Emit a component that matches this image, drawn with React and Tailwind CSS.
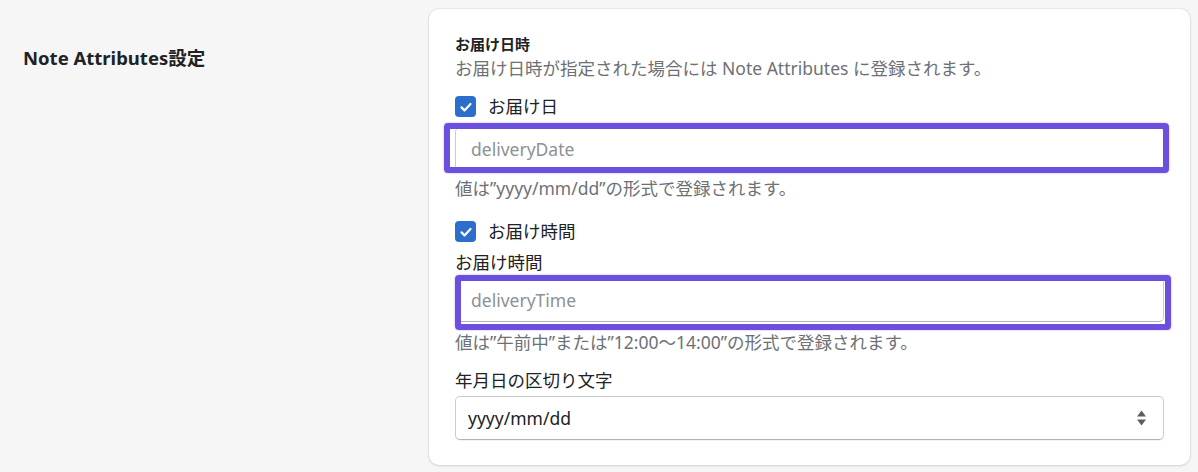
import React from 'react';

const font = { fontFamily: '"Noto Sans", "Noto Sans CJK JP", sans-serif' };

const Check = () => (
  <span className="flex h-[21px] w-[21px] items-center justify-center rounded-[4px] bg-[#2c6ecb]">
    <svg width="14" height="14" viewBox="0 0 14 14" fill="none">
      <path d="M2.5 7.4l3 3 6-6.4" stroke="#fff" strokeWidth="2.2" strokeLinecap="round" strokeLinejoin="round" />
    </svg>
  </span>
);

const CheckRow = ({ label, className }) => (
  <label className={`flex h-[25px] items-center ${className}`}>
    <Check />
    <span className="ml-[12px] text-[17.5px] leading-[25px] text-[#202223]">{label}</span>
  </label>
);

const TextInput = ({ placeholder }) => (
  <input
    readOnly
    placeholder={placeholder}
    className="h-[44px] w-full rounded-[5px] border border-[#c9cccf] border-b-[#aeb4b9] bg-white px-[15px] text-[17.5px] text-[#202223] outline-none placeholder:text-[#8c9196]"
  />
);

export default function App() {
  return (
    <div className="min-h-[472px] bg-[#f6f6f7] pl-[23px] pr-[8px] pt-[9px]" style={font}>
      <div className="flex">
        {/* 左カラム */}
        <div className="w-[406px] shrink-0 pt-[35px]">
          <h2 className="text-[18.5px] font-bold leading-[28px] text-[#202223]">Note Attributes設定</h2>
        </div>

        {/* カード */}
        <div className="flex flex-1 flex-col rounded-[10px] bg-white px-[26px] pb-[25px] pt-[25px] shadow-[0_0_0_1px_rgba(63,63,68,0.05),0_1px_3px_rgba(63,63,68,0.15)]">
          <p className="text-[15px] font-bold leading-[20px] text-[#202223]">お届け日時</p>
          <p className="mt-[2px] text-[17.5px] leading-[25px] text-[#6d7175]">
            お届け日時が指定された場合には Note Attributes に登録されます。
          </p>

          <CheckRow label="お届け日" className="mt-[13px]" />
          <div className="relative mt-[8px]">
            <TextInput placeholder="deliveryDate" />
            <div className="pointer-events-none absolute left-[-11px] top-[-4px] h-[50px] w-[725px] rounded-[4px] border-[6px] border-[#6d4fe0] shadow-[0_0_2px_rgba(109,79,224,0.5)]" />
          </div>
          <p className="mt-[5px] text-[17.5px] leading-[25px] text-[#6d7175]">値は”yyyy/mm/dd”の形式で登録されます。</p>

          <CheckRow label="お届け時間" className="mt-[18px]" />
          <p className="mt-[6px] text-[17.5px] leading-[25px] text-[#202223]">お届け時間</p>
          <div className="relative mt-[3px]">
            <TextInput placeholder="deliveryTime" />
            <div className="pointer-events-none absolute left-0 top-[-3px] h-[55px] w-[716px] rounded-[4px] border-[6px] border-[#6d4fe0] shadow-[0_0_2px_rgba(109,79,224,0.5)]" />
          </div>
          <p className="mt-[8px] text-[17.5px] leading-[25px] text-[#6d7175]">値は”午前中”または”12:00〜14:00”の形式で登録されます。</p>

          <p className="mt-[13px] text-[17.5px] leading-[25px] text-[#202223]">年月日の区切り文字</p>
          <div className="relative mt-[3px]">
            <select
              defaultValue="slash"
              className="h-[44px] w-full appearance-none rounded-[5px] border border-[#c9cccf] border-b-[#aeb4b9] bg-white pl-[12px] text-[17.5px] text-[#202223] shadow-[0_1px_0_rgba(22,29,37,0.05)] outline-none"
            >
              <option value="slash">yyyy/mm/dd</option>
              <option value="hyphen">yyyy-mm-dd</option>
            </select>
            <svg
              className="pointer-events-none absolute right-[18px] top-1/2 -translate-y-1/2"
              width="9"
              height="15"
              viewBox="0 0 9 15"
            >
              <path d="M4.5 0L9 6H0z" fill="#5c5f62" />
              <path d="M4.5 15L0 9h9z" fill="#5c5f62" />
            </svg>
          </div>
        </div>
      </div>
    </div>
  );
}
